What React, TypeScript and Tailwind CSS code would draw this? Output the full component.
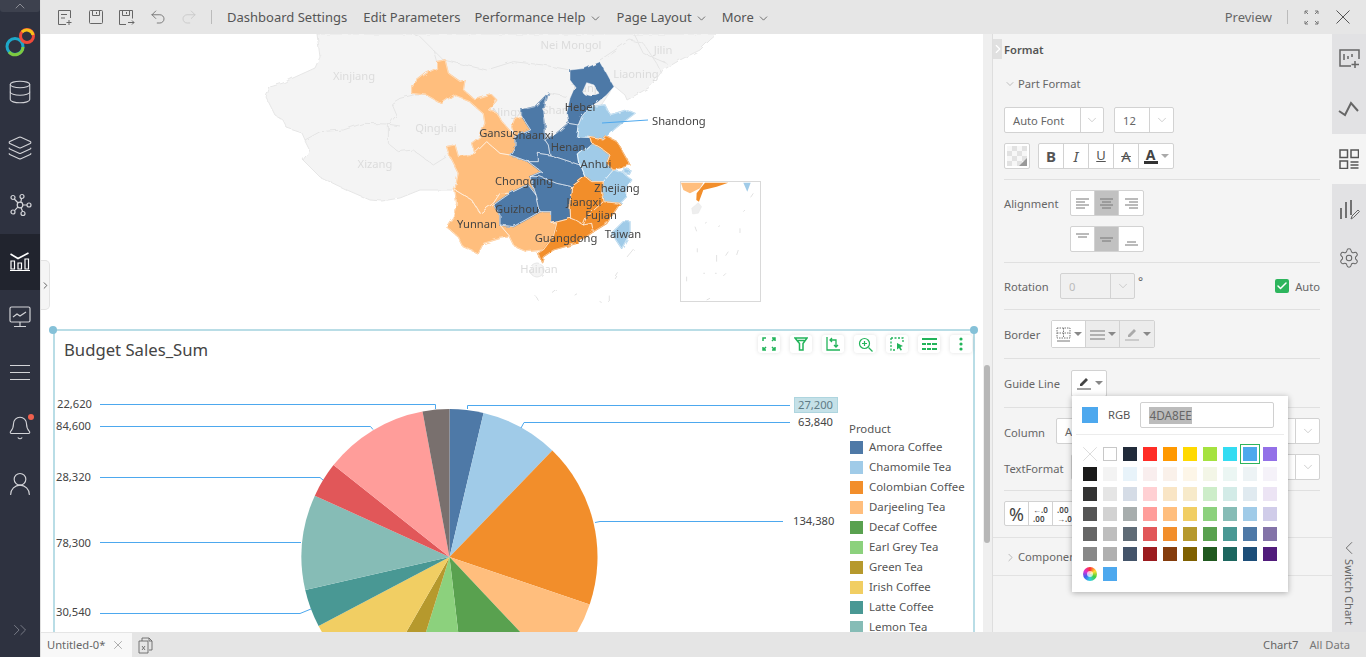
import React from 'react';
import { Database, Layers, Bell, UserRound, ChevronDown, ChevronRight, ChevronLeft, ChevronUp, ChevronsRight, Undo2, Redo2, X, Check, Settings } from 'lucide-react';

const slices = [
  { name: 'Amora Coffee', color: '#4e79a7', end: 13.3 },
  { name: 'Chamomile Tea', color: '#a0cbe8', end: 44 },
  { name: 'Colombian Coffee', color: '#f28e2b', end: 108.7 },
  { name: 'Darjeeling Tea', color: '#ffbe7d', end: 136.7 },
  { name: 'Decaf Coffee', color: '#59a14f', end: 173.4 },
  { name: 'Earl Grey Tea', color: '#8cd17d', end: 197.4 },
  { name: 'Green Tea', color: '#b6992d', end: 209.9 },
  { name: 'Irish Coffee', color: '#f1ce63', end: 242.2 },
  { name: 'Latte Coffee', color: '#499894', end: 257.1 },
  { name: 'Lemon Tea', color: '#86bcb6', end: 294.5 },
  { name: 'Mint Tea', color: '#e15759', end: 308.4 },
  { name: 'Oolong Tea', color: '#ff9d9a', end: 349.5 },
  { name: 'Regular Coffee', color: '#79706e', end: 360 },
];

const palette = [
  ['', '#ffffff', '#212b3a', '#ff2d26', '#ff9900', '#ffd900', '#a5e23f', '#33dcf2', '#4da8ee', '#9370e8'],
  ['#1a1a1a', '#f3f3f3', '#e8f3fa', '#f9eeee', '#faf1ea', '#fdf6e8', '#f3f6e7', '#ebf6f3', '#edf3f5', '#f5f2f9'],
  ['#333333', '#e5e5e5', '#d5dce6', '#ffd0d3', '#f9e5c5', '#f7eaca', '#cdedc9', '#d3ebe7', '#e0eaf0', '#ece4f4'],
  ['#555555', '#d2d2d2', '#a7adad', '#ff9d9a', '#ffbe7d', '#f1ce63', '#8cd17d', '#86bcb6', '#a0cbe8', '#d0cce9'],
  ['#666666', '#bebebe', '#5f6b76', '#e15759', '#f28e2b', '#b6992d', '#59a14f', '#499894', '#4e79a7', '#8373a8'],
  ['#888888', '#b0b0b0', '#44546a', '#9b1c1f', '#843c0c', '#7f6000', '#20591f', '#1d665f', '#1d4e79', '#511c7c'],
];

const piePath = (from: number, to: number) => {
  const cx = 449.5, cy = 557, r = 148;
  const pt = (a: number) => {
    const t = (a * Math.PI) / 180;
    return `${cx + r * Math.sin(t)} ${cy - r * Math.cos(t)}`;
  };
  return `M${cx} ${cy}L${pt(from)}A${r} ${r} 0 ${to - from > 180 ? 1 : 0} 1 ${pt(to)}Z`;
};

const regions: [string, string][] = [
  // Gansu, Ningxia, Sichuan, Yunnan, Guangxi
  ['#ffbe7d', '110,95 135,90 145,130 180,155 195,150 190,180 225,210 275,195 290,210 265,240 290,250 310,280 345,320 345,350 330,375 300,370 260,335 225,370 215,340 240,320 255,280 250,250 210,215 160,195 125,220 80,195 35,190 35,165 80,130 110,115'],
  ['#ffbe7d', '345,265 365,258 392,300 345,320 335,290'],
  ['#ffbe7d', '140,350 165,345 175,380 225,370 260,335 300,370 330,375 385,395 425,425 390,440 408,495 385,465 370,470 330,490 300,490 280,520 240,550 215,510 165,480 175,430 150,380'],
  ['#ffbe7d', '165,480 215,510 240,550 280,520 300,490 330,490 280,525 300,555 300,585 330,620 300,625 250,640 235,670 190,650 175,620 140,590 160,560 170,520'],
  ['#ffbe7d', '300,585 340,590 385,565 420,545 455,545 455,580 470,580 460,620 430,660 380,665 345,650 330,620'],
  // Shaanxi, Henan, Hubei, Hunan, Guizhou
  ['#4e79a7', '445,190 430,240 435,280 435,330 445,345 450,375 415,370 415,395 385,395 330,375 345,350 345,320 392,300 365,260 365,240 405,230'],
  ['#4e79a7', '505,280 535,285 530,320 570,322 575,340 535,375 540,405 510,395 450,375 445,345 435,330 470,310'],
  ['#4e79a7', '415,370 450,375 510,395 540,405 555,440 515,470 470,460 420,440 390,440 425,425 385,395 415,395'],
  ['#4e79a7', '420,440 470,460 515,470 510,520 512,565 455,580 455,545 420,545 410,500 390,440'],
  ['#4e79a7', '280,525 330,490 370,470 385,465 408,495 410,500 420,545 385,565 340,590 300,585 300,555'],
  // Shandong, Anhui, Zhejiang, Shanghai, Taiwan
  ['#a0cbe8', '570,230 615,225 630,255 680,240 705,250 665,280 640,300 610,330 570,322 530,320 535,285 545,260'],
  ['#a0cbe8', '575,340 590,345 630,375 620,400 640,420 610,455 575,455 555,440 540,405 535,375'],
  ['#a0cbe8', '640,420 670,430 695,450 680,470 680,500 660,520 610,515 605,490 610,455'],
  ['#a0cbe8', '672,415 690,420 685,430 672,428'],
  ['#a0cbe8', '665,655 635,610 670,575 690,575 690,610'],
  // Jiangsu, Jiangxi, Fujian, Guangdong
  ['#f28e2b', '570,322 610,330 620,320 650,335 670,370 690,405 640,420 620,400 630,375 590,345 575,340'],
  ['#f28e2b', '515,470 555,440 575,455 610,455 605,490 610,515 560,560 550,585 525,570 512,565 510,520'],
  ['#f28e2b', '610,515 660,520 620,580 580,605 575,580 550,585 560,560'],
  ['#f28e2b', '455,580 512,565 525,570 550,585 575,580 580,605 530,640 460,660 430,680 425,695 415,670 430,660 460,620 470,580'],
];

// Hebei has Beijing and Tianjin cut out of it
const hebei = 'M510 120L555 115L600 95L620 130L642 170L620 195L595 215L570 230L545 260L535 285L505 280L500 250L510 205L525 170L510 150ZM548 185L560 158L582 165L597 190L575 198L552 192Z';

const grayLabels: [string, number, number][] = [
  ['Nei Mongol', 571, 49], ['Jilin', 663, 54], ['Liaoning', 636, 78], ['Xinjiang', 354, 80],
  ['Qinghai', 436, 132], ['Xizang', 375, 168], ['Shanxi', 560, 114], ['Ningxia', 512, 116], ['Tianjin', 589, 92],
];

const darkLabels: [string, number, number][] = [
  ['Hebei', 580, 111], ['Gansu', 496, 137], ['Shaanxi', 533, 139], ['Henan', 568, 151], ['Anhui', 596, 168],
  ['Chongqing', 524, 185], ['Zhejiang', 617, 192], ['Jiangxi', 584, 206], ['Guizhou', 517, 213], ['Fujian', 601, 219],
  ['Yunnan', 477, 228], ['Guangdong', 566, 242], ['Taiwan', 623, 238],
];

const ChinaMap = () => (
  <svg viewBox="41 34 942 295" className="block h-[295px] w-[942px] shrink-0">
    <defs>
      <filter id="rough" x="-5%" y="-5%" width="110%" height="110%">
        <feTurbulence type="fractalNoise" baseFrequency="0.12" numOctaves="2" seed="4" />
        <feDisplacementMap in="SourceGraphic" scale="4" />
      </filter>
    </defs>
    <g filter="url(#rough)">
      <polygon
        points="317,34 320,57 315,68 293,78 283,83 270,87 266,97 275,115 283,120 287,128 302,133 305,140 310,150 303,160 320,177 347,190 370,200 382,201 400,198 420,190 455,190 520,190 600,150 598,110 610,92 613,85 625,95 627,100 650,87 663,70 680,60 700,50 710,40 717,34"
        fill="#f4f4f4"
        stroke="#e6e6e6"
      />
      <g transform="translate(400 30) scale(0.3333)" fill="none" stroke="#e4e4e4" strokeWidth="3">
        <polyline points="-285,330 -240,305 -170,300 -110,280 -40,282 0,288" />
        <polyline points="0,205 -25,220 -10,255 -35,285 -35,340 -5,365 40,360 100,405 140,380" />
        <polyline points="0,205 40,195 80,195" />
        <polyline points="100,60 130,90 260,120 340,95 430,105 510,120" />
        <polyline points="0,0 60,20 100,60 110,95" />
        <polyline points="600,90 690,30 730,40 770,100 785,130" />
        <polyline points="700,10 730,70 800,100" />
        <polyline points="445,190 500,200" />
      </g>
      <circle cx="537" cy="270" r="7" fill="#f4f4f4" stroke="#e6e6e6" />
    </g>
    <g className="fill-[#dcdcdc] text-[11.2px]" textAnchor="middle">
      {grayLabels.map(([t, x, y]) => <text key={t} x={x} y={y}>{t}</text>)}
      <text x="539" y="273">Hainan</text>
    </g>
    <g filter="url(#rough)">
      <g transform="translate(400 30) scale(0.3333)" strokeLinejoin="round">
        {regions.map(([fill, points], i) => <polygon key={i} fill={fill} stroke={fill} strokeWidth="4" points={points} />)}
        <path d={hebei} fill="#4e79a7" fillRule="evenodd" />
        {regions.map(([, points], i) => <polygon key={i} fill="none" stroke="#ffffff" strokeOpacity="0.7" strokeWidth="2" points={points} />)}
        <path d={hebei} fill="none" stroke="#ffffff" strokeOpacity="0.7" strokeWidth="2" />
      </g>
      <g transform="translate(400 30) scale(0.3333)" fill="none" stroke="#e2e2e2" strokeWidth="3" strokeLinecap="round">
        <path d="M405 797l10 14M460 790l10-8M525 795l5-3M628 798v20M640 748l12-20M682 680l18-22M600 815l4 2" />
      </g>
    </g>
    <line x1="602" y1="123" x2="648" y2="120" stroke="#4da8ee" />
    <text x="652" y="124.500" className="fill-[#444] text-[11.2px]">Shandong</text>
    <g className="fill-[#444] text-[11.2px]" textAnchor="middle">
      {darkLabels.map(([t, x, y]) => <text key={t} x={x} y={y}>{t}</text>)}
    </g>
    <rect x="680.500" y="181.500" width="80" height="120" fill="#fff" stroke="#d9d9d9" />
    <g transform="translate(400 30) scale(0.3333)" strokeLinejoin="round">
      <polygon fill="#ffbe7d" points="843,458 910,458 900,475 870,490 850,480" />
      <polygon fill="#f28e2b" points="915,458 985,458 950,470 910,480 897,515 889,510 890,490" />
      <polygon fill="#a0cbe8" points="1030,458 1052,458 1042,485" />
      <polygon fill="#eeeeee" stroke="#e0e0e0" points="875,535 895,518 905,530 895,550 878,552" />
      <path d="M885 590l5 14M915 580l5-3M955 590l5-3M1020 595v14M892 655v12M950 675v20M985 665l-8 12M1015 660l-5 15M860 740v14M910 730h5M945 730h5M970 738l8-8M1030 545l5-5M1060 490l-8 12M920 810l10-5" fill="none" stroke="#e2e2e2" strokeWidth="3" />
    </g>
  </svg>
);

const Leaders = () => (
  <svg viewBox="55 370 790 262" className="block h-[262px] w-[790px] shrink-0">
    {slices.map((s, i) => (
      <path key={s.name} d={piePath(i === 0 ? 0 : slices[i - 1].end, s.end)} fill={s.color} />
    ))}
    <g fill="none" stroke="#4da8ee">
      <path d="M100 404.500H435.500V409" />
      <path d="M100 426.500H370.500L373 429.500" />
      <path d="M100 477.500H320L323 480" />
      <path d="M100 542.500H301" />
      <path d="M100 613.500H300L311 609" />
      <path d="M467.500 409V405.500H790" />
      <path d="M521 428L524 422.500H790" />
      <path d="M595 522.500L600 521.500H783" />
    </g>
    <g className="fill-[#444] text-[11.2px]">
      <text x="57" y="408">22,620</text>
      <text x="56" y="430">84,600</text>
      <text x="56" y="481">28,320</text>
      <text x="56" y="547">78,300</text>
      <text x="56" y="616">30,540</text>
      <text x="798" y="426">63,840</text>
      <text x="793" y="525">134,380</text>
    </g>
    <rect x="794.500" y="397.500" width="43" height="15" fill="#c5e1e8" stroke="#aed5df" />
    <text x="798" y="409" className="fill-[#5f7c86] text-[11.2px]">27,200</text>
  </svg>
);

const ToolTile = ({ children }: { children: React.ReactNode }) => (
  <div className="flex h-[18px] w-[22px] items-center justify-center rounded-[3px] bg-white shadow-[0_0_4px_rgba(0,0,0,0.12)]">{children}</div>
);

const ChartTools = () => (
  <div className="absolute right-[1px] top-[4px] flex gap-[10px] text-[#22b45a]">
    <ToolTile>
      <svg width="14" height="14" viewBox="0 0 14 14" fill="none" stroke="currentColor" strokeWidth="1.500"><path d="M1 4V1h3M10 1h3v3M13 10v3h-3M4 13H1v-3M1 13l3-3M13 1l-3 3M10 10l3 3" /></svg>
    </ToolTile>
    <ToolTile>
      <svg width="14" height="14" viewBox="0 0 14 14" fill="none" stroke="currentColor" strokeWidth="1.500"><path d="M1 1h12L9 6.500V13H5.500V6.500zM3.500 3.500h7" /></svg>
    </ToolTile>
    <ToolTile>
      <svg width="14" height="14" viewBox="0 0 14 14" fill="none" stroke="currentColor" strokeWidth="1.300"><path d="M1 0v13h13M4 3h6v7M8 8l2 2 2-2M6 1L4 3l2 2" /></svg>
    </ToolTile>
    <ToolTile>
      <svg width="15" height="15" viewBox="0 0 15 15" fill="none" stroke="currentColor" strokeWidth="1.200"><circle cx="6.500" cy="6.500" r="5" /><path d="M10.500 10.500l4 4M6.500 4v5M4 6.500h5" /></svg>
    </ToolTile>
    <ToolTile>
      <svg width="14" height="14" viewBox="0 0 14 14" fill="none" stroke="currentColor" strokeWidth="1.300"><path d="M1 1h12v4M1 1v12h5" strokeDasharray="2 1.500" /><path d="M7 6l6 3-2.500 1L12 13l-1.500.500L9 11l-2 1.500z" fill="currentColor" stroke="none" /></svg>
    </ToolTile>
    <ToolTile>
      <svg width="15" height="12" viewBox="0 0 15 12" fill="currentColor"><path d="M0 0h15v2H0zM0 5h4v2H0zM5 5h4v2H5zM10 5h5v2h-5zM0 10h4v2H0zM5 10h4v2H5zM10 10h5v2h-5z" /></svg>
    </ToolTile>
    <ToolTile>
      <svg width="4" height="14" viewBox="0 0 4 14" fill="currentColor"><circle cx="2" cy="2" r="1.600" /><circle cx="2" cy="7" r="1.600" /><circle cx="2" cy="12" r="1.600" /></svg>
    </ToolTile>
  </div>
);

const BudgetCard = () => (
  <div className="relative ml-[12px] w-[922px] flex-1 border-x-2 border-t-2 border-[#b9dde6]">
    <span className="absolute -left-[6px] -top-[5px] h-[8px] w-[8px] rounded-full bg-[#85c1d8]" />
    <span className="absolute -right-[5px] -top-[5px] h-[8px] w-[8px] rounded-full bg-[#85c1d8]" />
    <ChartTools />
    <div className="h-[39px] pl-[9px] pt-[7px] text-[16.700px] leading-[24px] text-[#444]">Budget Sales_Sum</div>
    <div className="flex">
      <Leaders />
      <div className="h-[262px] overflow-hidden pl-[4px] pt-[51px] text-[11.400px] text-[#555]">
        <div className="h-[16px] leading-[16px]">Product</div>
        {slices.slice(0, 10).map(s => (
          <div key={s.name} className="flex h-[20px] items-center gap-[6px] pl-[1px]">
            <span className="h-[13px] w-[13px]" style={{ backgroundColor: s.color }} />
            <span className="whitespace-nowrap">{s.name}</span>
          </div>
        ))}
      </div>
    </div>
  </div>
);

const Rows = [
  { h: 'h-[56px]', active: false },
  { h: 'h-[56px]', active: false },
  { h: 'h-[58px]', active: false },
  { h: 'h-[56px]', active: true },
  { h: 'h-[54px]', active: false },
  { h: 'h-[56px]', active: false },
  { h: 'h-[56px]', active: false },
  { h: 'h-[56px]', active: false },
];

const sideIcons = [
  <Database size={26} strokeWidth={1} />,
  <Layers size={26} strokeWidth={1} />,
  <svg width="24" height="24" viewBox="0 0 24 24" fill="none" stroke="currentColor" strokeWidth="1.200">
    <circle cx="12" cy="12" r="2.800" /><circle cx="5" cy="4.500" r="2" /><circle cx="14" cy="3.500" r="2" /><circle cx="21" cy="12" r="2" /><circle cx="15" cy="20.500" r="2" /><circle cx="5" cy="19" r="2" />
    <path d="M6.300 6l3.800 4M13.500 5.500L12.800 9.300M19 12h-4.200M14.600 18.500L13 14.600M6.500 17.600l3.500-3.700" />
  </svg>,
  <svg width="22" height="20" viewBox="0 0 22 20" fill="none" stroke="#fff" strokeWidth="1.200">
    <path d="M1 18.500h20M2 9v8h3.500V9zM9 11v6h3.500v-6zM16 7v10h3.500V7z" />
    <path d="M1.500 2L9 6.500 19.500 1" strokeWidth="1.600" />
  </svg>,
  <svg width="22" height="22" viewBox="0 0 22 22" fill="none" stroke="currentColor" strokeWidth="1.200">
    <rect x="1" y="1" width="20" height="15" rx="1.500" />
    <path d="M4 11l4-3 3 2 6-4M11 16v4M5 20.500h12" />
  </svg>,
  <svg width="20" height="16" viewBox="0 0 20 16" stroke="currentColor" strokeWidth="1"><path d="M0 1.500h20M0 8.500h20M0 15.500h20" /></svg>,
  <div className="relative">
    <Bell size={26} strokeWidth={1} />
    <span className="absolute -right-[1px] -top-[1px] h-[6px] w-[6px] rounded-full bg-[#f0604e]" />
  </div>,
  <UserRound size={28} strokeWidth={1} />,
];

const Sidebar = () => (
  <div className="flex w-[40px] shrink-0 flex-col bg-[#2e3240] text-[#d3d4d8]">
    <div className="flex h-[12px] items-center justify-center rounded-b-[3px] bg-[#3d414e] text-[#8b8d95]">
      <ChevronUp size={16} strokeWidth={1.500} />
    </div>
    <div className="flex h-[52px] items-center justify-center pt-[8px]">
      <svg width="32" height="32" viewBox="0 0 32 32" fill="none" strokeWidth="3">
        <circle cx="11" cy="20.500" r="8" stroke="#1ea8c9" />
        <path d="M5 26a8 8 0 0 0 14-5" stroke="#7ec93f" />
        <circle cx="23" cy="10" r="6.500" stroke="#f04a3a" />
        <path d="M18 6a6.500 6.500 0 0 1 11 3" stroke="#f7c21a" />
      </svg>
    </div>
    {Rows.map((r, i) => (
      <div key={i} className={`flex items-center justify-center ${r.h} ${r.active ? 'bg-[#21242e]' : ''}`}>{sideIcons[i]}</div>
    ))}
    <div className="mt-auto flex h-[54px] items-end justify-center pb-[16px] text-[#7d808b]">
      <ChevronsRight size={22} strokeWidth={1} />
    </div>
  </div>
);

const TopIcon = ({ children }: { children: React.ReactNode }) => (
  <div className="flex w-[31px] items-center justify-center">{children}</div>
);

const MenuText = ({ label, caret, className }: { label: string; caret?: boolean; className: string }) => (
  <div className={`flex items-center gap-[3px] whitespace-nowrap pt-[2px] text-[13px] text-[#555] ${className}`}>
    {label}
    {caret && <ChevronDown size={13} strokeWidth={1.500} />}
  </div>
);

const TopBar = () => (
  <div className="flex h-[34px] shrink-0 items-center bg-[#e6e6e6] pl-[8px] text-[#666]">
    <TopIcon>
      <svg width="16" height="17" viewBox="0 0 16 17" fill="none" stroke="currentColor"><path d="M9 15.500H1.500V1.500h12V9M4 5.500h6M4 9h4M12 11v5M9.500 13.500h5" /></svg>
    </TopIcon>
    <TopIcon>
      <svg width="16" height="16" viewBox="0 0 16 16" fill="none" stroke="currentColor"><rect x="1.500" y="1.500" width="13" height="13" rx="1" /><path d="M4.500 1.500v5h7v-5M8.500 3v2" /></svg>
    </TopIcon>
    <TopIcon>
      <svg width="17" height="17" viewBox="0 0 17 17" fill="none" stroke="currentColor"><path d="M8 15.500H1.500v-14h13v8M4.500 1.500v5h7v-5M8.500 3v2M10 13.500h6M14 11.500l2 2-2 2" /></svg>
    </TopIcon>
    <TopIcon><Undo2 size={18} strokeWidth={1.100} /></TopIcon>
    <TopIcon><Redo2 size={18} strokeWidth={1.100} className="text-[#c6c6c6]" /></TopIcon>
    <div className="ml-[7px] h-[14px] w-px bg-[#bbb]" />
    <MenuText label="Dashboard Settings" className="ml-[15px]" />
    <MenuText label="Edit Parameters" className="ml-[16px]" />
    <MenuText label="Performance Help" caret className="ml-[14px]" />
    <MenuText label="Page Layout" caret className="ml-[15px]" />
    <MenuText label="More" caret className="ml-[14px]" />
    <div className="ml-auto whitespace-nowrap pt-[2px] text-[13px] text-[#666]">Preview</div>
    <div className="ml-[15px] h-[14px] w-px bg-[#bbb]" />
    <div className="ml-[16px] text-[#777]">
      <svg width="15" height="15" viewBox="0 0 15 15" fill="none" stroke="currentColor"><path d="M1 4V1h3M1 1l3 3M11 1h3v3M14 1l-3 3M14 11v3h-3M14 14l-3-3M4 14H1v-3M1 14l3-3" /></svg>
    </div>
    <div className="ml-[17px] mr-[16px] text-[#555]">
      <svg width="14" height="14" viewBox="0 0 14 14" stroke="currentColor" strokeWidth="1"><path d="M0.500 0.500l13 13M13.500 0.500l-13 13" /></svg>
    </div>
  </div>
);

const Select = ({ label, w, arrow, disabled }: { label: string; w: string; arrow: string; disabled?: boolean }) => (
  <div className={`flex h-[26px] items-stretch rounded-[2px] border border-[#d2d2d2] text-[11.200px] ${w} ${disabled ? 'bg-[#f0f0f0] text-[#bbb]' : 'bg-white text-[#666]'}`}>
    <div className="flex flex-1 items-center border-r border-[#d2d2d2] pl-[8px] pt-[2px]">{label}</div>
    <div className={`flex items-center justify-center ${arrow}`}><ChevronDown size={14} strokeWidth={1.200} className="text-[#bbb]" /></div>
  </div>
);

const Cell = ({ children, on, last, w = 'w-[25px]' }: { children: React.ReactNode; on?: boolean; last?: boolean; w?: string }) => (
  <div className={`flex items-center justify-center ${w} ${on ? 'bg-[#c1c1c1]' : ''} ${last ? '' : 'border-r border-[#d2d2d2]'}`}>{children}</div>
);

const Lines = ({ d }: { d: string }) => (
  <svg width="15" height="13" viewBox="0 0 15 13" stroke="#777" strokeWidth="1"><path d={d} /></svg>
);

const Field = ({ label, className }: { label: string; className: string }) => (
  <div className={`whitespace-nowrap pt-[2px] text-[11.200px] text-[#666] ${className}`}>{label}</div>
);

const Caret = ({ color = 'border-t-[#888]' }: { color?: string }) => (
  <span className={`ml-[3px] h-0 w-0 border-x-[4px] border-t-[4px] border-x-transparent ${color}`} />
);

const Pen = ({ color }: { color: string }) => (
  <svg width="16" height="13" viewBox="0 0 16 13" fill={color}><path d="M10 1l2 2-6 6H4V7zM1 11.500h14v1H1z" /></svg>
);

const ColorPopup = () => (
  <div className="absolute left-[79px] top-[362px] h-[196px] w-[216px] bg-white shadow-[0_1px_6px_rgba(0,0,0,0.3)]">
    <div className="mx-[4px] flex h-[39px] items-center border-b border-[#ececec] pl-[6px]">
      <span className="h-[16px] w-[16px] bg-[#4da8ee]" />
      <span className="ml-[10px] pt-[1px] text-[11.200px] text-[#555]">RGB</span>
      <div className="ml-[10px] flex h-[26px] w-[134px] items-center rounded-[2px] border border-[#d0d0d0] pl-[8px] pt-[1px] text-[11.800px] text-[#666]">
        <span className="bg-[#bcbcbc]">4DA8EE</span>
      </div>
    </div>
    <div className="flex flex-col gap-[6px] pl-[11px] pt-[12px]">
      {palette.map((row, r) => (
        <div key={r} className="flex gap-[6px]">
          {row.map((c, i) => (
            c === '' ? (
              <div key={i} className="flex h-[14px] w-[14px] items-center justify-center text-[#dcdcdc]"><X size={26} strokeWidth={0.900} className="shrink-0" /></div>
            ) : (
              <div
                key={i}
                className={`h-[14px] w-[14px] ${c === '#ffffff' ? 'border border-[#c8c8c8]' : ''} ${r === 0 && i === 8 ? 'outline-1 outline-offset-2 outline-[#2db55d]' : ''}`}
                style={{ backgroundColor: c }}
              />
            )
          ))}
        </div>
      ))}
      <div className="flex gap-[6px]">
        <div className="flex h-[14px] w-[14px] items-center justify-center rounded-full bg-[conic-gradient(#ff3030,#ffe030,#40d040,#30d0e0,#4060f0,#e030d0,#ff3030)]">
          <span className="h-[6px] w-[6px] rounded-full bg-white/70" />
        </div>
        <div className="h-[14px] w-[14px] bg-[#4da8ee]" />
      </div>
    </div>
  </div>
);

const FormatPanel = () => (
  <div className="relative w-[340px] shrink-0 border-l border-[#dedede] bg-[#f4f4f4]">
    <div className="absolute left-0 top-[5px] flex h-[20px] w-[9px] items-center justify-center overflow-hidden bg-[#e0e0e0] text-white">
      <ChevronRight size={14} strokeWidth={2} className="shrink-0" />
    </div>
    <div className="flex h-[30px] items-center pl-[11px] pt-[2px] text-[11.200px] font-semibold text-[#555]">Format</div>
    <div className="pl-[11px] pr-[12px]">
      <div className="flex h-[40px] items-center text-[11.200px] text-[#666]">
        <ChevronDown size={12} className="mr-[2px] text-[#999]" strokeWidth={1.200} /><span>Part Format</span>
      </div>
      <div className="mt-[3px] flex gap-[10px]">
        <Select label="Auto Font" w="w-[100px]" arrow="w-[22px]" />
        <Select label="12" w="w-[60px]" arrow="w-[23px]" />
      </div>
      <div className="mt-[10px] flex h-[37px] gap-[8px] border-b border-[#e0e0e0] pb-[10px]">
        <div className="flex w-[26px] items-center justify-center rounded-[2px] border border-[#d2d2d2] bg-white">
          <div className="relative h-[20px] w-[20px] bg-[repeating-conic-gradient(#e2e2e2_0_25%,#f7f7f7_0_50%)] bg-[length:10px_10px]">
            <span className="absolute bottom-0 right-0 h-0 w-0 border-b-[8px] border-l-[8px] border-b-[#999] border-l-transparent" />
          </div>
        </div>
        <div className="flex rounded-[2px] border border-[#d2d2d2] bg-white text-[#555]">
          <Cell><span className="text-[15px] font-bold">B</span></Cell>
          <Cell><span className="text-[15px] italic">I</span></Cell>
          <Cell><span className="text-[13px] underline">U</span></Cell>
          <Cell><span className="text-[15px] line-through">A</span></Cell>
          <div className="flex w-[34px] items-center justify-center">
            <div className="flex flex-col items-center text-[14px] font-bold leading-[13px] text-[#444]">A<span className="h-[3px] w-[14px] bg-[#333]" /></div>
            <Caret color="border-t-[#aaa]" />
          </div>
        </div>
      </div>
      <div className="flex h-[83px] border-b border-[#e0e0e0] pt-[10px]">
        <Field label="Alignment" className="h-[26px] w-[66px] leading-[24px]" />
        <div className="flex flex-col gap-[10px]">
          <div className="flex h-[26px] w-[74px] rounded-[2px] border border-[#d2d2d2] bg-white">
            <Cell w="w-[24px]"><Lines d="M1 2h13M1 5h9M1 8h13M1 11h9" /></Cell>
            <Cell w="w-[24px]" on><Lines d="M1 2h13M3 5h9M1 8h13M3 11h9" /></Cell>
            <Cell w="w-[24px]" last><Lines d="M1 2h13M5 5h9M1 8h13M5 11h9" /></Cell>
          </div>
          <div className="flex h-[26px] w-[74px] rounded-[2px] border border-[#d2d2d2] bg-white">
            <Cell w="w-[24px]"><Lines d="M1 1h13M3 4h9" /></Cell>
            <Cell w="w-[24px]" on><Lines d="M1 5h13M3 8h9" /></Cell>
            <Cell w="w-[24px]" last><Lines d="M3 9h9M1 12h13" /></Cell>
          </div>
        </div>
      </div>
      <div className="flex h-[47px] items-center border-b border-[#e0e0e0]">
        <Field label="Rotation" className="w-[56px]" />
        <Select label="0" w="w-[75px]" arrow="w-[23px]" disabled />
        <span className="mb-[8px] ml-[3px] text-[12px] text-[#666]">°</span>
        <div className="ml-auto flex h-[14px] w-[14px] items-center justify-center rounded-[2px] bg-[#2db55d] text-white"><Check size={12} strokeWidth={3} /></div>
        <span className="ml-[6px] pt-[2px] text-[11.200px] text-[#666]">Auto</span>
      </div>
      <div className="flex h-[49px] items-center border-b border-[#e0e0e0]">
        <Field label="Border" className="w-[47px]" />
        <div className="flex h-[28px] rounded-[2px] border border-[#d2d2d2]">
          <div className="flex w-[34px] items-center justify-center border-r border-[#d2d2d2] bg-white">
            <svg width="15" height="15" viewBox="0 0 15 15" fill="none" stroke="#777"><path d="M1 1h13v10H1zM7.500 1v10M1 6h13" strokeDasharray="1.500 1" /><path d="M1 14h13" /></svg>
            <Caret />
          </div>
          <div className="flex w-[34px] items-center justify-center border-r border-[#d2d2d2] bg-[#ececec]">
            <Lines d="M0 3h15M0 7h15M0 11h15" />
            <Caret />
          </div>
          <div className="flex w-[34px] items-center justify-center bg-[#ececec]">
            <Pen color="#aaa" />
            <Caret />
          </div>
        </div>
      </div>
      <div className="flex h-[49px] items-center border-b border-[#e0e0e0]">
        <Field label="Guide Line" className="w-[67px]" />
        <div className="flex h-[27px] w-[36px] items-center justify-center rounded-[2px] border border-[#d2d2d2] bg-white">
          <Pen color="#444" />
          <Caret />
        </div>
      </div>
      <div className="flex h-[46px] items-start pt-[10px]">
        <Field label="Column" className="w-[52px] leading-[26px]" />
        <Select label="A" w="w-[264px]" arrow="w-[23px]" />
      </div>
      <div className="flex h-[37px] items-start border-b border-[#e0e0e0]">
        <Field label="TextFormat" className="w-[67px] leading-[26px]" />
        <Select label="" w="w-[249px]" arrow="w-[23px]" />
      </div>
      <div className="mt-[10px] flex h-[25px] w-[100px] rounded-[2px] border border-[#d2d2d2] bg-white text-[#444]">
        <Cell w="w-[24px]"><span className="text-[18px] leading-none">%</span></Cell>
        <Cell w="w-[24px]"><span className="whitespace-nowrap text-[8px] font-semibold leading-[9px]">←.0<br />.00</span></Cell>
        <Cell w="w-[24px]"><span className="whitespace-nowrap text-[8px] font-semibold leading-[9px]">.00<br />→.0</span></Cell>
      </div>
    </div>
    <div className="mt-[11px] flex h-[39px] items-center border-y border-[#e2e2e2] pl-[11px] pt-[2px] text-[11.200px] text-[#666]">
      <ChevronRight size={13} strokeWidth={1.200} className="mr-[1px] text-[#999]" />Component
    </div>
    <ColorPopup />
  </div>
);

const SideTabs = () => (
  <div className="flex w-[34px] shrink-0 flex-col items-center bg-[#e2e2e4] text-[#666]">
    <div className="flex h-[50px] w-full items-center justify-center">
      <svg width="21" height="20" viewBox="0 0 21 20" fill="none" stroke="currentColor" strokeWidth="1.500"><path d="M12 17H1V1h19v9M5 5v6M9 7v3M13 5v3M16 12v7M12.500 15.500h7.500" /></svg>
    </div>
    <div className="flex h-[50px] w-full items-center justify-center">
      <svg width="22" height="16" viewBox="0 0 22 16" fill="currentColor" stroke="currentColor" strokeWidth="2"><path d="M1 10l6 4 6-12 7 8" fill="none" /></svg>
    </div>
    <div className="flex h-[50px] w-full items-center justify-center bg-[#f4f4f4]">
      <svg width="20" height="20" viewBox="0 0 20 20" fill="none" stroke="#555" strokeWidth="1.500"><rect x="1" y="1" width="7.500" height="7.500" /><rect x="12" y="1" width="7.500" height="7.500" /><rect x="1" y="12" width="7.500" height="7.500" /><path d="M11.500 13h8M11.500 16h8M11.500 19h8" /></svg>
    </div>
    <div className="flex h-[50px] w-full items-center justify-center">
      <svg width="21" height="21" viewBox="0 0 21 21" fill="none" stroke="currentColor" strokeWidth="1.800"><path d="M2 9v11M7 3v16M12 1v15" /><path d="M12 20l1-3 6-6 1.500 1.500-6 6z" strokeWidth="1" /></svg>
    </div>
    <div className="flex h-[48px] w-full items-center justify-center"><Settings size={22} strokeWidth={1.100} /></div>
    <div className="mt-auto flex flex-col items-center pb-[7px]">
      <ChevronLeft size={22} strokeWidth={1} />
      <span className="text-[11.200px] [writing-mode:vertical-rl]">Switch Chart</span>
    </div>
  </div>
);

const BottomBar = () => (
  <div className="flex h-[25px] shrink-0 items-center bg-[#e5e5e5] pt-[1px] text-[11.200px] text-[#666]">
    <div className="flex h-full w-[91px] items-center bg-[#f8f8f8] pl-[6px]">
      Untitled-0*<X size={14} strokeWidth={1} className="ml-[6px] text-[#777]" />
    </div>
    <div className="ml-[6px] text-[#666]">
      <svg width="15" height="17" viewBox="0 0 15 17" fill="none" stroke="currentColor" strokeWidth="0.900"><path d="M4 4V1h7l3 3v9h-3M1 4h9v12H1zM11 1v3h3" /><path d="M4 9l3 4M7 9l-3 4" /></svg>
    </div>
    <span className="ml-auto">Chart7</span>
    <span className="ml-[11px] mr-[16px] text-[#777]">All Data</span>
  </div>
);

export default function App() {
  return (
    <div className="flex h-[657px] w-[1366px] overflow-hidden bg-white font-['Noto_Sans',sans-serif]">
      <Sidebar />
      <div className="w-px shrink-0 bg-[#e0e0e0]" />
      <div className="relative flex min-w-0 flex-1 flex-col">
        <TopBar />
        <div className="flex min-h-0 flex-1">
          <div className="flex w-[942px] shrink-0 flex-col overflow-hidden bg-white">
            <ChinaMap />
            <BudgetCard />
          </div>
          <div className="w-[9px] shrink-0 bg-[#efefef] pl-[1px] pt-[331px]">
            <div className="h-[178px] w-[6px] rounded-[3px] bg-[#b7b7b7]" />
          </div>
          <FormatPanel />
          <SideTabs />
        </div>
        <BottomBar />
        <div className="absolute left-0 top-[260px] flex h-[50px] w-[9px] items-center justify-center rounded-r-[5px] border-y border-r border-[#e2e2e2] bg-[#f5f5f5] text-[#555]">
          <ChevronRight size={11} strokeWidth={2} className="shrink-0" />
        </div>
      </div>
    </div>
  );
}
